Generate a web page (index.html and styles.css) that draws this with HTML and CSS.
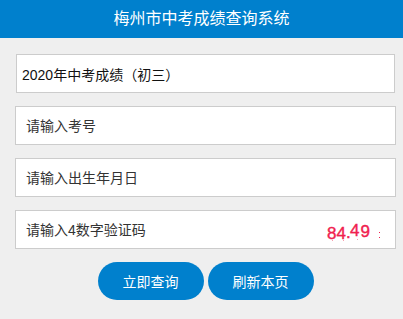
FILE: index.html
```html
<!DOCTYPE html>
<html lang="zh-CN">
<head>
  <meta charset="UTF-8">
  <title>梅州市中考成绩查询系统</title>
  <link rel="stylesheet" href="styles.css">
</head>
<body>

<div class="header">梅州市中考成绩查询系统</div>

<div class="form">
  <div class="field field-select">2020年中考成绩（初三）</div>
  <div class="field"><input type="text" placeholder="请输入考号"></div>
  <div class="field"><input type="text" placeholder="请输入出生年月日"></div>
  <div class="field field-code">
    <input type="text" placeholder="请输入4数字验证码">
    <svg class="captcha" width="60" height="26" viewBox="0 0 60 26">
      <g fill="#f0214f" stroke="#f0214f" stroke-width="0.4" font-size="17" font-family="Liberation Sans, sans-serif">
        <text x="1" y="21.5">8</text>
        <text x="10.5" y="21.5">4</text>
        <text x="20" y="20.5">.</text>
        <text x="24" y="19">4</text>
        <text x="34.5" y="19.5">9</text>
      </g>
      <rect x="53" y="15" width="1" height="1" fill="#f0214f"/>
      <rect x="53" y="20" width="1" height="1" fill="#f0214f"/>
      <rect x="6" y="23" width="1" height="1" fill="#f7a0b0"/>
      <rect x="17" y="23" width="1" height="1" fill="#f7a0b0"/>
      <rect x="31" y="22" width="1" height="1" fill="#f7a0b0"/>
    </svg>
  </div>

  <div class="buttons">
    <button class="btn">立即查询</button>
    <button class="btn">刷新本页</button>
  </div>
</div>

</body>
</html>
```

FILE: styles.css
```css
body {
  margin: 0;
  background: #efefef;
  font-family: "Liberation Sans", "Noto Sans CJK SC", sans-serif;
}

.header {
  height: 38px;
  line-height: 37px;
  background: #0080cd;
  color: #fff;
  text-align: center;
  font-size: 16px;
}

.form {
  padding: 16px 7px 0 15px;
}

.field {
  display: flex;
  align-items: center;
  height: 39px;
  margin-bottom: 13px;
  background: #fff;
  border: 1px solid #cccccc;
  box-sizing: border-box;
}

.field input {
  flex: 1;
  border: none;
  outline: none;
  padding: 0 0 0 10px;
  height: 100%;
  font-size: 14px;
  font-family: "Liberation Sans", "Noto Sans CJK SC", sans-serif;
  color: #333;
  background: transparent;
}

.field input::placeholder {
  color: #333;
}

.field-select {
  margin-left: 1px;
  margin-right: 1px;
  padding-left: 5px;
  font-size: 14px;
  color: #111;
}

.field-code .captcha {
  margin-right: 9px;
}

.buttons {
  display: flex;
  justify-content: center;
  gap: 4px;
}

.btn {
  width: 106px;
  height: 38px;
  border: none;
  border-radius: 19px;
  background: #0080cd;
  color: #fff;
  font-size: 14px;
  font-family: "Liberation Sans", "Noto Sans CJK SC", sans-serif;
  cursor: pointer;
}
```
